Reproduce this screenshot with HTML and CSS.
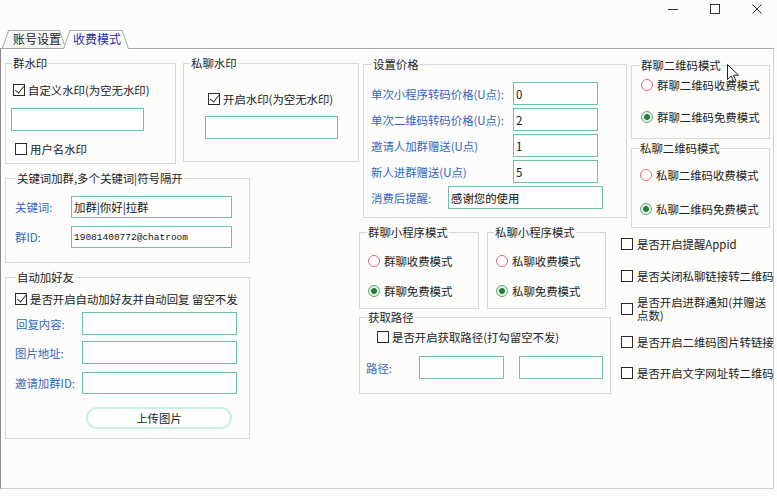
FILE: index.html
```html
<!DOCTYPE html>
<html lang="zh-CN">
<head>
<meta charset="utf-8">
<title>收费模式</title>
<link rel="stylesheet" href="styles.css">
</head>
<body>
<div class="titlebar">
  <span class="wb"><svg width="12" height="12" viewBox="0 0 12 12"><path d="M1 6.5H11" stroke="#333" stroke-width="1"/></svg></span>
  <span class="wb"><svg width="12" height="12" viewBox="0 0 12 12"><rect x="1.5" y="1.5" width="9" height="9" fill="none" stroke="#333" stroke-width="1"/></svg></span>
  <span class="wb close"><svg width="12" height="12" viewBox="0 0 12 12"><path d="M1.5 1.5L10.5 10.5M10.5 1.5L1.5 10.5" stroke="#333" stroke-width="1"/></svg></span>
</div>
<div class="tabs">
  <div class="tab">账号设置</div>
  <div class="tab active">收费模式</div>
</div>
<div class="panel">
  <div class="col-left">
    <div class="toprow">
      <fieldset class="g g-qsy">
        <legend>群水印</legend>
        <label class="chk qsy-c1"><span class="cb on"></span>自定义水印(为空无水印)</label>
        <input class="inp qsy-in" value="">
        <label class="chk qsy-c2"><span class="cb"></span>用户名水印</label>
      </fieldset>
      <fieldset class="g g-slsy">
        <legend>私聊水印</legend>
        <label class="chk slsy-c"><span class="cb on"></span>开启水印(为空无水印)</label>
        <input class="inp slsy-in" value="">
      </fieldset>
    </div>
    <fieldset class="g g-kw">
      <legend>关键词加群,多个关键词|符号隔开</legend>
      <div class="frow kw-r1"><span class="lb kw-lb">关键词:</span><input class="inp kw-in" value="加群|你好|拉群"></div>
      <div class="frow kw-r2"><span class="lb kw-lb">群ID:</span><input class="inp kw-in mono" value="19081400772@chatroom"></div>
    </fieldset>
    <fieldset class="g g-auto">
      <legend>自动加好友</legend>
      <label class="chk auto-c"><span class="cb on"></span>是否开启自动加好友并自动回复 留空不发</label>
      <div class="frow auto-r1"><span class="lb auto-lb">回复内容:</span><input class="inp auto-in" value=""></div>
      <div class="frow auto-r2"><span class="lb auto-lb">图片地址:</span><input class="inp auto-in" value=""></div>
      <div class="frow auto-r3"><span class="lb auto-lb">邀请加群ID:</span><input class="inp auto-in h22" value=""></div>
      <button class="btn" type="button">上传图片</button>
    </fieldset>
  </div>

  <div class="col-mid">
    <fieldset class="g g-price">
      <legend>设置价格</legend>
      <div class="frow pr-r first"><span class="lb pr-lb">单次小程序转码价格(U点):</span><input class="inp pr-in" value="0"></div>
      <div class="frow pr-r"><span class="lb pr-lb">单次二维码转码价格(U点):</span><input class="inp pr-in" value="2"></div>
      <div class="frow pr-r"><span class="lb pr-lb">邀请人加群赠送(U点)</span><input class="inp pr-in" value="1"></div>
      <div class="frow pr-r"><span class="lb pr-lb">新人进群赠送(U点)</span><input class="inp pr-in" value="5"></div>
      <div class="frow pr-r"><span class="lb pr-lb2">消费后提醒:</span><input class="inp pr-in2" value="感谢您的使用"></div>
    </fieldset>
    <div class="minirow">
      <fieldset class="g g-mini">
        <legend>群聊小程序模式</legend>
        <label class="rad mini-r1"><span class="rb"></span>群聊收费模式</label>
        <label class="rad mini-r2"><span class="rb on"></span>群聊免费模式</label>
      </fieldset>
      <fieldset class="g g-mini g-mini2">
        <legend>私聊小程序模式</legend>
        <label class="rad mini-r1"><span class="rb"></span>私聊收费模式</label>
        <label class="rad mini-r2"><span class="rb on"></span>私聊免费模式</label>
      </fieldset>
    </div>
    <fieldset class="g g-path">
      <legend>获取路径</legend>
      <label class="chk path-c"><span class="cb"></span>是否开启获取路径(打勾留空不发)</label>
      <div class="frow path-r"><span class="lb path-lb">路径:</span><input class="inp path-in" value=""><input class="inp path-in path-in2" value=""></div>
    </fieldset>
  </div>

  <div class="col-right">
    <fieldset class="g g-qr g-qr1">
      <legend>群聊二维码模式</legend>
      <label class="rad qr1-r1"><span class="rb"></span>群聊二维码收费模式</label>
      <label class="rad qr1-r2"><span class="rb on"></span>群聊二维码免费模式</label>
    </fieldset>
    <fieldset class="g g-qr g-qr2">
      <legend>私聊二维码模式</legend>
      <label class="rad qr2-r1"><span class="rb"></span>私聊二维码收费模式</label>
      <label class="rad qr2-r2"><span class="rb on"></span>私聊二维码免费模式</label>
    </fieldset>
    <div class="opts">
      <label class="chk op1"><span class="cb"></span>是否开启提醒Appid</label>
      <label class="chk op2"><span class="cb"></span>是否关闭私聊链接转二维码</label>
      <label class="chk op3"><span class="cb"></span><span class="two">是否开启进群通知(并赠送<br>点数)</span></label>
      <label class="chk op4"><span class="cb"></span>是否开启二维码图片转链接</label>
      <label class="chk op5"><span class="cb"></span>是否开启文字网址转二维码</label>
    </div>
  </div>
</div>
<svg class="cursor" width="13" height="19" viewBox="0 0 13 19"><path d="M0.5 0.5V15.5L4.2 12L6.8 17.8L9 16.8L6.5 11.2H11.5Z" fill="#fff" stroke="#222" stroke-width="1" stroke-linejoin="round"/></svg>
</body>
</html>
```
FILE: styles.css
```css
* { box-sizing: border-box; }
html, body { margin: 0; padding: 0; }
body {
  width: 777px; height: 496px; overflow: hidden; position: relative;
  background: #fcfdfb;
  font-family: "Noto Sans CJK SC", "Noto Sans", sans-serif;
  font-size: 11.4px; line-height: 14px; color: #222;
}

/* title bar */
.titlebar { height: 30px; display: flex; justify-content: flex-end; align-items: flex-start; }
.wb { width: 42px; height: 18px; display: flex; align-items: center; justify-content: center; }
.wb.close { width: 41px; }

/* tabs */
.tabs { height: 18px; display: flex; align-items: flex-end; padding-left: 2px; font-size: 12px; }
.tab { position: relative; z-index: 1; height: 18px; line-height: 18px; padding: 0 5px 0 11px; white-space: nowrap; color: #222; }
.tab::before, .tab::after {
  content: ""; position: absolute; top: 0; bottom: 0; z-index: -1;
  background: #f6f7f5; border-top: 1px solid #a9a9a9;
}
.tab::before { left: 0; right: 50%; border-left: 1px solid #a9a9a9; transform: skewX(-19deg); transform-origin: left bottom; }
.tab::after { right: 0; left: 50%; border-right: 1px solid #a9a9a9; transform: skewX(19deg); transform-origin: right bottom; }
.tab.active { z-index: 2; color: #2a2aa6; height: 19px; margin-bottom: -1px; margin-left: -3px; padding: 0 7px 0 10px; }
.tab.active::before, .tab.active::after { background: #fcfdfb; }

/* panel */
.panel {
  width: 774px; height: 441px;
  border: 1px solid #cfcfcf; border-left-color: #8a8a8a; border-top-color: #a9a9a9;
  padding: 7px 0 0 4px;
  display: flex; align-items: flex-start;
}
.col-left { width: 354px; flex: none; display: flex; flex-direction: column; align-items: flex-start; }
.col-mid { width: 252px; flex: none; display: flex; flex-direction: column; align-items: flex-start; }
.col-right { width: 159px; flex: none; display: flex; flex-direction: column; align-items: flex-start; }

/* group boxes */
.g { margin: 0; padding: 0; min-width: 0; border: 1px solid #d7d7d7; display: flex; flex-direction: column; align-items: flex-start; flex: none; }
.g > legend { margin-left: 6px; padding: 0 1px; line-height: 14px; color: #222; white-space: nowrap; }

/* controls */
.chk, .rad { display: flex; align-items: center; height: 14px; gap: 3px; white-space: nowrap; }
.rad { gap: 4px; }
.cb { position: relative; width: 12px; height: 12px; border: 1px solid #2b2b2b; background: #fff; flex: none; }
.cb.on::after {
  content: ""; position: absolute; left: 3px; top: -1px; width: 4px; height: 8px;
  border: solid #2b2b2b; border-width: 0 1.6px 1.6px 0; transform: rotate(38deg);
}
.rb { width: 12px; height: 12px; border-radius: 50%; border: 1.5px solid #d66f7e; background: #fff; flex: none; }
.rb.on { border-color: #6aa482; background: radial-gradient(circle, #23803c 0 2.6px, #e3f1e7 3.2px); }

.inp {
  display: block; margin: 0; height: 23px; padding: 0 2px;
  border: 1px solid #6dc2a3; background: #fff; border-radius: 0;
  font: 11.4px/1 "Noto Sans CJK SC", "Noto Sans", sans-serif; color: #111; outline: none;
}
.inp.h22 { height: 22px; }
.inp.mono { font-family: "Liberation Mono", "DejaVu Sans Mono", monospace; font-size: 9.5px; padding-left: 2px; }
.frow { display: flex; align-items: center; }
.lb { flex: none; color: #3366c2; white-space: nowrap; }

.btn {
  padding: 0; height: 22px; border: 2px solid #c9f1e6; border-radius: 11px;
  background: #fdfefd; font: 11.4px/18px "Noto Sans CJK SC", "Noto Sans", sans-serif; color: #222;
}

/* 群水印 */
.toprow { display: flex; align-items: flex-start; gap: 7px; }
.g-qsy { width: 171px; height: 108px; }
.qsy-c1 { margin: 13px 0 0 7px; }
.qsy-in { margin: 11px 0 0 5px; width: 133px; }
.qsy-c2 { margin: 11px 0 0 9px; }

/* 私聊水印 */
.g-slsy { width: 176px; height: 106px; }
.slsy-c { margin: 22px 0 0 24px; }
.slsy-in { margin: 10px 0 0 21px; width: 133px; }

/* 关键词 */
.g-kw { width: 245px; height: 92px; margin-top: 7px; }
.g-kw > legend, .g-auto > legend { margin-left: 10px; }
.kw-r1 { margin: 11px 0 0 9px; }
.kw-r2 { margin: 8px 0 0 9px; }
.kw-lb { width: 56px; }
.kw-in { width: 161px; height: 22px; }

/* 自动加好友 */
.g-auto { width: 245px; height: 169px; margin-top: 7px; }
.auto-c { margin: 8px 0 0 9px; }
.auto-r1 { margin: 6px 0 0 10px; }
.auto-r1 .auto-lb { width: 66px; }
.auto-r2 { margin: 6px 0 0 9px; }
.auto-r3 { margin: 8px 0 0 9px; }
.auto-lb { width: 67px; }
.auto-in { width: 155px; }
.btn { margin: 13px 0 0 80px; width: 146px; }

/* 设置价格 */
.g-price { width: 264px; height: 161px; margin: 1px 0 0 4px; }
.g-price > legend { margin-left: 8px; }
.pr-r { margin: 3px 0 0 7px; }
.pr-r.first { margin-top: 11px; }
.pr-lb { width: 142px; }
.pr-in { width: 85px; }
.pr-lb2 { width: 77px; }
.pr-in2 { width: 155px; }

/* 小程序模式 */
.minirow { display: flex; gap: 8px; margin-top: 7px; }
.g-mini { width: 120px; height: 84px; }
.g-mini2 { width: 119px; }
.g-mini > legend { margin-left: 7px; }
.g-mini2 > legend { margin-left: 6px; }
.mini-r1 { margin: 15px 0 0 8px; }
.mini-r2 { margin: 16px 0 0 8px; }

/* 获取路径 */
.g-path { width: 252px; height: 84px; margin-top: 1px; }
.g-path > legend { margin-left: 7px; }
.path-c { margin: 6px 0 0 17px; }
.path-r { margin: 12px 0 0 6px; }
.path-lb { width: 53px; }
.path-in { width: 85px; }
.path-in2 { width: 84px; margin-left: 15px; }

/* 二维码模式 */
.g-qr { width: 139px; margin-left: 20px; }
.g-qr1 { height: 81px; margin-top: 2px; }
.g-qr1 > legend { margin-left: 8px; }
.qr1-r1 { margin: 6px 0 0 9px; }
.qr1-r2 { margin: 18px 0 0 9px; }
.g-qr2 { height: 87px; margin-top: 2px; }
.g-qr2 > legend { margin-left: 7px; }
.qr2-r1 { margin: 13px 0 0 8px; }
.qr2-r2 { margin: 20px 0 0 8px; }

/* options */
.opts { display: flex; flex-direction: column; align-items: flex-start; margin-left: 10px; }
.opts .chk { gap: 4px; }
.op1 { margin-top: 9px; }
.op2 { margin-top: 18px; }
.op3 { margin-top: 13px; height: 26px; }
.op4 { margin-top: 13px; }
.op5 { margin-top: 17px; }
.two { line-height: 13px; }

.cursor { position: absolute; left: 727px; top: 64px; }
```
